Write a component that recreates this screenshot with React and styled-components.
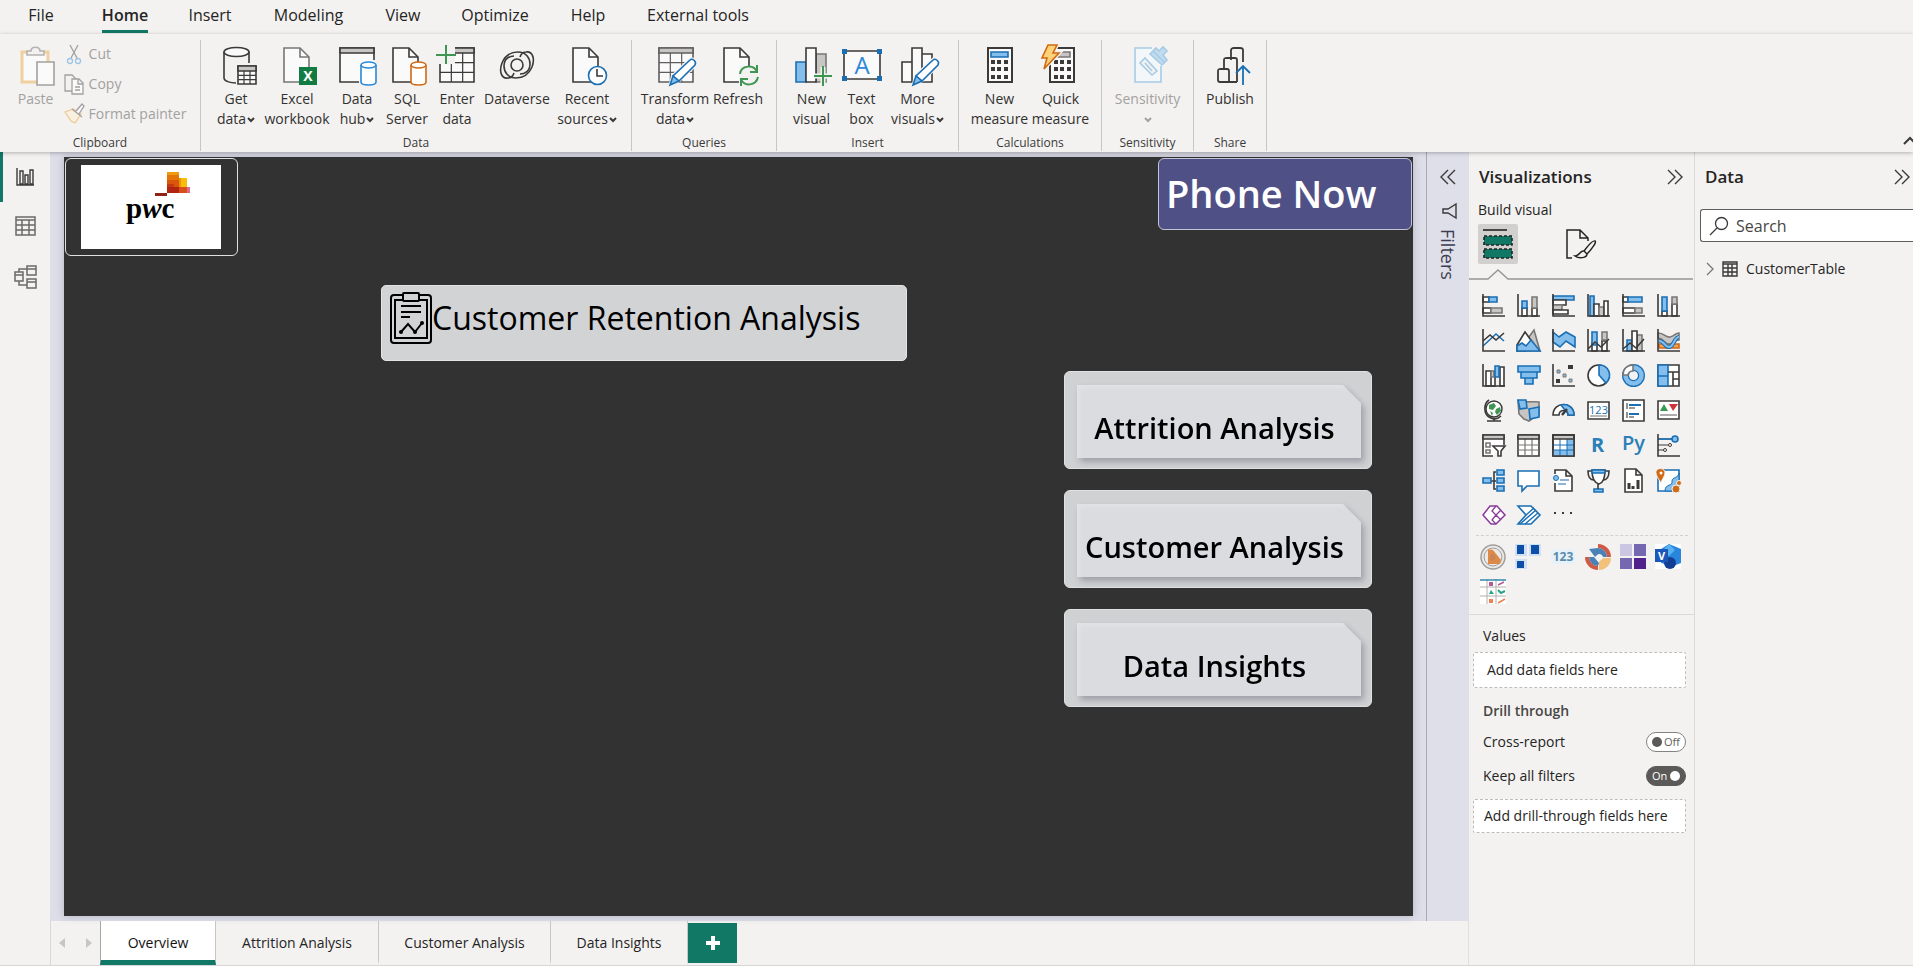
import React, { useState } from "react";
import styled, { createGlobalStyle, css } from "styled-components";

const ink = "#252423";
const line = "#3b3a39";
const grayLine = "#797775";
const grayFill = "#c8c6c4";
const blue = "#1a6fb4";
const blueFill = "#83beec";
const green = "#117865";
const leaf = "#3f9652";
const orange = "#d06a13";

const GlobalStyle = createGlobalStyle`
  *, *::before, *::after { box-sizing: border-box; }
  body {
    margin: 0;
    background: #f3f2f1;
    color: ${ink};
    font-family: "Open Sans", "Noto Sans", sans-serif;
    font-size: 14px;
  }
  button, input { font: inherit; color: inherit; }
  button { background: none; border: 0; padding: 0; cursor: pointer; }
  svg { display: block; overflow: visible; flex: none; }
`;

/* ---------- layout ---------- */

const Page = styled.div`
  min-height: 100vh;
  display: flex;
  flex-direction: column;
  overflow: hidden;
  border-bottom: 1px solid #d8d6d6;
`;

const MenuBar = styled.nav`
  display: flex;
  height: 34px;
  padding-left: 8px;
`;

const MenuTab = styled.button`
  width: ${(p) => p.$width}px;
  display: flex;
  justify-content: center;
  font-size: 16px;
  line-height: 30px;
  white-space: nowrap;
  font-weight: ${(p) => (p.$active ? 600 : 400)};
  span {
    height: 33px;
    border-bottom: 3px solid ${(p) => (p.$active ? green : "transparent")};
  }
`;

const Ribbon = styled.div`
  position: relative;
  z-index: 1;
  display: flex;
  height: 118px;
  padding: 6px 0 1px;
  background: #f3f2f1;
  box-shadow: 0 1px 4px rgba(0, 0, 0, 0.28);
`;

const Group = styled.section`
  display: flex;
  flex-direction: column;
  width: ${(p) => p.$width}px;
  border-right: 1px solid #c8c6c4;
`;

const GroupBody = styled.div`
  height: 95px;
  display: flex;
  justify-content: center;
  padding-top: 6px;
`;

const GroupName = styled.div`
  font-size: 12px;
  line-height: 16px;
  text-align: center;
  color: #3b3a39;
`;

const BigButton = styled.button`
  width: ${(p) => p.$width}px;
  display: flex;
  flex-direction: column;
  align-items: center;
  font-size: 14px;
  line-height: 20px;
  white-space: nowrap;
  color: ${(p) => (p.disabled ? "#a3a19f" : "#323130")};
  svg.art { margin-bottom: 3px; }
`;

const LabelLine = styled.span`
  height: 20px;
  display: flex;
  align-items: center;
  gap: 1px;
`;

const SmallButtons = styled.div`
  display: flex;
  flex-direction: column;
  padding-right: 6px;
`;

const SmallButton = styled.button`
  height: 30px;
  margin-top: -7px;
  margin-bottom: 7px;
  display: flex;
  align-items: center;
  gap: 5px;
  font-size: 14px;
  color: #a3a19f;
`;

const CollapseRibbon = styled.button`
  margin-left: auto;
  margin-right: -4px;
  align-self: flex-end;
  margin-bottom: 5px;
`;

const Main = styled.main`
  flex: 1;
  display: flex;
`;

const Rail = styled.nav`
  width: 50px;
  display: flex;
  flex-direction: column;
`;

const RailButton = styled.button`
  height: 50px;
  display: flex;
  align-items: center;
  padding-left: 9px;
  border-left: 3px solid ${(p) => (p.$active ? green : "transparent")};
`;

const Workspace = styled.div`
  flex: 1;
  min-width: 0;
  display: flex;
  flex-direction: column;
`;

const Stage = styled.div`
  flex: 1;
  display: flex;
  background: #dddee8;
`;

const CanvasArea = styled.div`
  flex: 1;
  display: flex;
  padding: 5px 13px 5px 14px;
`;

const Report = styled.div`
  flex: 1;
  display: flex;
  flex-direction: column;
  padding: 1px;
  background: #323232;
  box-shadow: 0 0 8px rgba(60, 60, 90, 0.25);
`;

const ReportHeader = styled.header`
  display: flex;
  justify-content: space-between;
  align-items: flex-start;
`;

const LogoCard = styled.div`
  width: 173px;
  height: 98px;
  padding: 6px 15px;
  border: 1px solid #e0e0e0;
  border-radius: 6px;
`;

const LogoImage = styled.div`
  width: 140px;
  height: 84px;
  padding: 7px 0 0 45px;
  background: #fff;
`;

const LogoText = styled.div`
  font-family: "Liberation Serif", serif;
  font-weight: 700;
  font-size: 29px;
  line-height: 20px;
  color: #000;
`;

const PhoneCard = styled.h1`
  width: 254px;
  height: 72px;
  margin: 0;
  padding-left: 7px;
  border: 1px solid #c4c4d8;
  border-radius: 6px;
  background: #4f5086;
  color: #fff;
  font-size: 38px;
  line-height: 68px;
  font-weight: 600;
  white-space: nowrap;
`;

const TitleCard = styled.h2`
  width: 526px;
  height: 76px;
  margin: 29px 0 0 316px;
  padding: 6px 8px;
  display: flex;
  align-items: flex-start;
  border-radius: 5px;
  border: 1px solid #e3e4e5;
  background: #d2d3d5;
  color: #000;
  font-size: 32px;
  line-height: 52px;
  font-weight: 400;
  white-space: nowrap;
`;

const PageNav = styled.nav`
  align-self: flex-end;
  display: flex;
  flex-direction: column;
  gap: 21px;
  margin: 10px 40px 0 0;
`;

const NavCard = styled.div`
  width: 308px;
  height: 98px;
  padding: 13px 10px 11px 12px;
  border: 1px solid #e0e1e2;
  border-radius: 6px;
  background: #cfd1d3;
`;

const NavShadow = styled.div`
  height: 73px;
  filter: drop-shadow(3px 4px 3px rgba(100, 100, 115, 0.45));
`;

const NavButton = styled.button`
  width: 100%;
  height: 100%;
  padding: 12px 9px 0 0;
  background: #dbdce0;
  box-shadow: inset 3px 3px 5px rgba(255, 255, 255, 0.2);
  clip-path: polygon(0 0, calc(100% - 18px) 0, 100% 18px, 100% 100%, 0 100%);
  color: #000;
  font-size: 29px;
  line-height: 40px;
  font-weight: 600;
  white-space: nowrap;
`;

const FiltersPane = styled.aside`
  width: 42px;
  display: flex;
  flex-direction: column;
  align-items: center;
  padding-top: 17px;
  border-left: 1px solid #a9a9b8;
  background: #dedfe9;
`;

const FiltersLabel = styled.div`
  display: flex;
  align-items: center;
  gap: 10px;
  margin-top: 18px;
  writing-mode: vertical-rl;
  font-size: 18px;
  line-height: 24px;
  font-weight: 500;
  color: #3d3d52;
`;

const PageTabs = styled.div`
  display: flex;
  height: 44px;
  border-left: 1px solid #d8d6d6;
`;

const TabArrows = styled.div`
  width: 49px;
  display: flex;
  align-items: center;
  justify-content: space-between;
  padding: 0 8px;
`;

const PageTab = styled.button`
  width: ${(p) => p.$width}px;
  border-right: 1px solid #c8c6c4;
  border-bottom: 5px solid transparent;
  padding-top: 4px;
  font-size: 14px;
  white-space: nowrap;
  ${(p) =>
    p.$active &&
    css`
      background: #fff;
      border-left: 1px solid #a8a6a4;
      border-bottom-color: ${green};
      color: #111;
    `}
`;

const AddPage = styled.button`
  width: 49px;
  height: 40px;
  margin-top: 2px;
  display: grid;
  place-items: center;
  background: ${green};
`;

const VizPane = styled.aside`
  width: 226px;
  display: flex;
  flex-direction: column;
  border-left: 1px solid #e1dfdd;
`;

const PaneHead = styled.div`
  display: flex;
  align-items: center;
  justify-content: space-between;
  padding: ${(p) => p.$pad};
  h2 {
    margin: 0;
    font-size: 17px;
    line-height: 24px;
    font-weight: 600;
  }
`;

const BuildLabel = styled.div`
  padding: 11px 0 0 9px;
  font-size: 14px;
  line-height: 20px;
  font-weight: 500;
`;

const ModeTabs = styled.div`
  display: flex;
  gap: 43px;
  margin-top: 4px;
  padding-left: 9px;
`;

const ModeButton = styled.button`
  width: 40px;
  height: 40px;
  display: grid;
  place-items: center;
  border-radius: 2px;
  background: ${(p) => (p.$active ? "#d2d0ce" : "transparent")};
`;

const Notch = styled.div`
  display: flex;
  height: 10px;
  margin-top: 6px;
  svg { width: 224px; height: 10px; }
`;

const IconGrid = styled.div`
  display: grid;
  grid-template-columns: repeat(6, 23px);
  grid-auto-rows: 23px;
  gap: 12px;
  padding: 14px 0 0 13px;
  button { display: grid; place-items: center; }
`;

const DashedRule = styled.div`
  margin: 8px 6px 0 7px;
  border-top: 1px dashed #d2d0ce;
`;

const CustomGrid = styled.div`
  display: grid;
  grid-template-columns: repeat(6, 26px);
  grid-auto-rows: 26px;
  gap: 9px;
  padding: 8px 0 9px 11px;
  border-bottom: 1px solid #dcdad8;
`;

const FieldWells = styled.div`
  display: flex;
  flex-direction: column;
  padding: 11px 8px 0 4px;
  font-size: 14px;
  line-height: 20px;
`;

const WellName = styled.div`
  padding-left: 10px;
  font-weight: ${(p) => (p.$strong ? 600 : 400)};
  color: ${(p) => (p.$strong ? "#484644" : ink)};
`;

const DropWell = styled.div`
  margin: ${(p) => p.$margin};
  padding: ${(p) => p.$pad};
  background: #fff;
  border: 1px dashed #bebbb8;
  border-radius: 2px;
  white-space: nowrap;
`;

const ToggleList = styled.div`
  padding-top: 4px;
`;

const ToggleRow = styled.label`
  height: 34px;
  display: flex;
  align-items: center;
  justify-content: space-between;
  padding-left: 10px;
`;

const ToggleTrack = styled.span`
  position: relative;
  width: 40px;
  height: 20px;
  display: flex;
  flex-direction: ${(p) => (p.$on ? "row-reverse" : "row")};
  align-items: center;
  justify-content: space-between;
  padding: 0 5px;
  border: 1px solid ${(p) => (p.$on ? "#5c5a58" : "#858381")};
  border-radius: 10px;
  background: ${(p) => (p.$on ? "#5c5a58" : "#fff")};
  color: ${(p) => (p.$on ? "#fff" : "#605e5c")};
  font-size: 11px;
  i {
    width: 10px;
    height: 10px;
    border-radius: 50%;
    background: ${(p) => (p.$on ? "#fff" : "#5c5a58")};
  }
  input {
    position: absolute;
    inset: 0;
    margin: 0;
    opacity: 0;
  }
`;

const DataPane = styled.aside`
  width: 219px;
  border-left: 1px solid #dcdad8;
`;

const SearchBox = styled.label`
  height: 33px;
  margin: 20px 0 0 5px;
  padding-left: 9px;
  display: flex;
  align-items: center;
  gap: 8px;
  border: 1px solid #605e5c;
  border-right: 0;
  border-radius: 3px 0 0 3px;
  background: #fff;
  input {
    flex: 1;
    min-width: 0;
    border: 0;
    padding: 0;
    outline: 0;
    background: none;
    font-size: 16px;
  }
  input::placeholder { color: #484644; opacity: 1; }
`;

const TreeItem = styled.button`
  display: flex;
  align-items: center;
  margin: 17px 0 0 11px;
  font-size: 14px;
  line-height: 20px;
  svg + svg { margin: 0 8px 0 8px; }
`;

/* ---------- ribbon icons ---------- */

const Art = ({ children }) => (
  <svg className="art" width="44" height="40" viewBox="0 0 44 40" fill="none" stroke={line} strokeWidth="1.6" aria-hidden="true">
    {children}
  </svg>
);

const Doc = ({ x = 8, stroke = line }) => (
  <g stroke={stroke}>
    <path d={`M${x + 1} 2h16l9 9v25h-25z`} fill="#fafafa" />
    <path d={`M${x + 17} 2v9h9`} />
  </g>
);

const Cylinder = ({ color }) => (
  <g stroke={color} fill="#fff">
    <path d="M26 19v17c0 4 15 4 15 0V19" />
    <ellipse cx="33.500" cy="19" rx="7.500" ry="3" />
  </g>
);

const Pencil = () => (
  <g stroke={blue}>
    <path d="M37 14c2-2 7 1 5 5L26 34l-8 4 2-8z" fill="#f3f2f1" stroke="#f3f2f1" strokeWidth="4" />
    <path d="M37 14c2-2 7 1 5 5L26 35l-6-5z" fill="#fff" />
    <path d="M20 30l6 5-9 4z" fill={blueFill} />
  </g>
);

const Table = ({ x, y, w, h, color = line }) => (
  <g stroke={color}>
    <path d={`M${x} ${y}h${w}v${h}h-${w}z`} fill="#fafafa" />
    <path d={`M${x} ${y}h${w}v5h-${w}z`} fill={grayFill} />
    <path
      strokeWidth="1.2"
      d={`M${x + w / 3} ${y + 5}v${h - 5}M${x + (2 * w) / 3} ${y + 5}v${h - 5}M${x} ${y + 5 + (h - 5) / 3}h${w}M${x} ${y + 5 + (2 * (h - 5)) / 3}h${w}`}
    />
  </g>
);

const Keys = ({ dx = 0 }) => (
  <g fill={line} stroke="none">
    {[14, 21, 29].map((y) => [13, 19, 26].map((x) => <rect key={`${x}-${y}`} x={x + dx} y={y} width="4" height="4" />))}
  </g>
);

const swirl = "M13 32c-7 1-9-7-6-15C10 10 16 6 23 6c8 0 12 6 12 12 0 7-5 10-10 10M13 32c3 0 5-2 6-5";

const art = {
  paste: (
    <g>
      <path d="M8 6h26v30H8z" stroke="#f0cfa0" strokeWidth="3" fill="#fafafa" />
      <path d="M13 8V5h4c0-5 9-5 9 0h4v4H13z" stroke="#b5b3b1" fill="#f3f2f1" />
      <path d="M23 16h17v23H23z" stroke="#a3a19f" fill="#fafafa" />
    </g>
  ),
  getData: (
    <g>
      <path d="M10 6v26c0 3 6 5 12 5M35 6v11" />
      <ellipse cx="22.500" cy="6" rx="12.500" ry="4.500" fill="#fafafa" />
      <Table x={24} y={20} w={18} h={18} />
    </g>
  ),
  excel: (
    <g>
      <Doc x={8} stroke={grayLine} />
      <rect x="24" y="21" width="18" height="18" fill="#107c41" stroke="none" />
      <text x="33" y="35" textAnchor="middle" fontSize="14" fontWeight="700" fill="#fff" stroke="none">X</text>
    </g>
  ),
  hub: (
    <g>
      <path d="M39 14V2H5v34h19" fill="#fafafa" />
      <path d="M5 2h34v5H5z" fill={grayFill} />
      <Cylinder color="#2b88d8" />
    </g>
  ),
  sql: (
    <g>
      <Doc x={7} />
      <Cylinder color={orange} />
    </g>
  ),
  enter: (
    <g>
      <Table x={5} y={2} w={34} h={34} />
      <path d="M0 0h20v18H0z" fill="#f3f2f1" stroke="none" />
      <path d="M11-1v19M1 9h20" stroke={leaf} strokeWidth="2" />
    </g>
  ),
  dataverse: (
    <g strokeWidth="1.600">
      <circle cx="22" cy="19" r="6" />
      <path d={swirl} />
      <path d={swirl} transform="rotate(180 22 19)" />
    </g>
  ),
  recent: (
    <g>
      <Doc x={7} />
      <circle cx="32.500" cy="29.500" r="9" fill="#fff" stroke={blue} />
      <path d="M32 23v7h6" />
    </g>
  ),
  transform: (
    <g>
      <Table x={6} y={2} w={34} h={34} color="#605e5c" />
      <Pencil />
    </g>
  ),
  refresh: (
    <g>
      <Doc x={7} />
      <path d="M23 20h20v20H23z" fill="#f3f2f1" stroke="none" />
      <path d="M24 28c1-9 14-10 17-2M41 19v7h-7M42 31c-2 9-14 10-17 2M25 40v-7h7" stroke={leaf} strokeWidth="2" />
    </g>
  ),
  newVisual: (
    <g>
      <path d="M6 16h10v20H6z" fill={blueFill} stroke={blue} />
      <path d="M26 8h10v28H26z" fill={grayFill} stroke={grayLine} />
      <path d="M16 2h10v34H16z" fill="#fafafa" />
      <path d="M33 21v18M24 30h18" stroke="#f3f2f1" strokeWidth="5" />
      <path d="M33 20v20M24 30h18" stroke={leaf} strokeWidth="2" />
    </g>
  ),
  textBox: (
    <g>
      <path d="M4 5h36v28H4z" fill="#fafafa" />
      <g fill={blue} stroke="none">
        <path d="M2 3h5v5H2zM37 3h5v5h-5zM2 30h5v5H2zM37 30h5v5h-5z" />
      </g>
      <text x="22" y="28" textAnchor="middle" fontSize="24" fill="#2b88d8" stroke="none">A</text>
    </g>
  ),
  more: (
    <g>
      <path d="M6 16h10v20H6zM26 8h10v28H26zM16 2h10v34H16z" fill="#fafafa" />
      <Pencil />
    </g>
  ),
  measure: (
    <g>
      <path d="M10 2h24v34H10z" fill="#fafafa" strokeWidth="2" />
      <path d="M13 6h17v5H13z" fill={blueFill} stroke={blue} />
      <Keys />
    </g>
  ),
  quick: (
    <g>
      <path d="M11 2h24v34H11z" fill="#fafafa" strokeWidth="2" />
      <path d="M15 6h16v5H15z" fill={grayFill} stroke={grayLine} />
      <Keys dx={2} />
      <path d="M9-1h9l-4 8h6L5 23l3-11H3z" fill="#ffd27a" stroke="#f3f2f1" strokeWidth="4" />
      <path d="M9-1h9l-4 8h6L5 23l3-11H3z" fill="#ffd27a" stroke={orange} />
    </g>
  ),
  sensitivity: (
    <g stroke="#a6cbe6">
      <path d="M26 2H9v34h26V20" fill="#f3f7fa" />
      <path d="M14 17l5-5 12 13-5 4zM19 17l7 8" fill="#f3f2f1" />
      <path d="M24 8l6-6 3 3 4-4 4 4-4 4 4 5-5 5z" fill="#c2dcef" />
      <path d="M27 5l12 12" />
    </g>
  ),
  publish: (
    <g strokeWidth="1.800">
      <path d="M23 14V4c0-1 1-2 3-2h6c2 0 3 1 3 2v12M16 23V14c0-2 1-2 3-2h8c2 0 2 1 2 2v22M29 36H12c-2 0-2-1-2-2v-9c0-2 1-2 3-2h6c2 0 2 1 2 2v11" />
      <path d="M35 39V20M28 27l7-7 7 7" stroke={blue} />
    </g>
  ),
};

const Caret = ({ color = line }) => (
  <svg width="8" height="8" viewBox="0 0 8 8" fill="none" stroke={color} strokeWidth="2" aria-hidden="true">
    <path d="M1 3l3 3 3-3" />
  </svg>
);

const DoubleChevron = ({ left }) => (
  <svg width="16" height="16" viewBox="0 0 16 16" fill="none" stroke={line} strokeWidth="1.4" aria-hidden="true">
    <path d={left ? "M8 1L1 8l7 7M15 1L8 8l7 7" : "M1 1l7 7-7 7M8 1l7 7-7 7"} />
  </svg>
);

const small = {
  cut: (
    <g stroke="#a3a19f">
      <path d="M6 1l7 13M14 1L7 14" />
      <g stroke="#9cc4e4"><circle cx="6" cy="17" r="2.500" /><circle cx="14" cy="17" r="2.500" /></g>
    </g>
  ),
  copy: (
    <g stroke="#a3a19f">
      <path d="M8 17H1V1h7l4 4" />
      <path d="M8 5h7l4 4v11H8zM14 5v5h5M11 13h5M11 16h5" fill="#fafafa" />
    </g>
  ),
  painter: (
    <g stroke="#a3a19f">
      <path d="M1 9l6 9 4 2 6-9-8-5z" stroke="#f0c894" fill="#faf0e0" />
      <path d="M8 6l10 8M12 8l6-7 2 2-5 8" fill="#fafafa" />
    </g>
  ),
};

/* ---------- visualization icons ---------- */

const G = ({ d, f = "none", s = line, w = 1.6 }) => <path d={d} fill={f} stroke={s} strokeWidth={w} />;
const Axis = () => <G d="M1 0v22h22" />;

const vizIcons = [
  ["Stacked bar chart", <><G d="M1 14h8v5H1z" f="#fff" /><G d="M9 14h11v5H9z" f={grayFill} s={grayLine} /><G d="M1 3h6v5H1z" f="#fff" /><G d="M7 3h8v5H7z" f={blueFill} s={blue} /><Axis /></>],
  ["Stacked column chart", <><G d="M5 14h5v8H5zM15 14h5v8h-5z" f="#fff" /><G d="M5 7h5v7H5z" f={blueFill} s={blue} /><G d="M15 3h5v11h-5z" f={grayFill} s={grayLine} /><Axis /></>],
  ["Clustered bar chart", <><G d="M1 2h21v4H1z" f={blueFill} s={blue} /><G d="M1 6h13v5H1z" f="#fff" /><G d="M1 11h9v5H1z" f={grayFill} s={grayLine} /><G d="M1 16h15v4H1z" f="#fff" /><Axis /></>],
  ["Clustered column chart", <><G d="M3 2h4v20H3z" f={blueFill} s={blue} /><G d="M7 10h5v12H7z" f="#fff" /><G d="M12 13h5v9h-5z" f={grayFill} s={grayLine} /><G d="M17 7h4v15h-4z" f="#fff" /><Axis /></>],
  ["100% stacked bar chart", <><G d="M1 14h12v5H1z" f="#fff" /><G d="M13 14h7v5h-7z" f={grayFill} s={grayLine} /><G d="M1 3h5v5H1z" f="#fff" /><G d="M6 3h14v5H6z" f={blueFill} s={blue} /><Axis /></>],
  ["100% stacked column chart", <><G d="M5 17h5v5H5zM15 10h5v12h-5z" f="#fff" /><G d="M5 3h5v14H5z" f={blueFill} s={blue} /><G d="M15 3h5v7h-5z" f={grayFill} s={grayLine} /><Axis /></>],
  ["Line chart", <><G d="M1 17L14 5l8 7" s={blue} /><G d="M1 12l7-6 6 5 8-7" /><Axis /></>],
  ["Area chart", <><G d="M9 12l8-11 6 21H8z" f={grayFill} s={grayLine} /><G d="M0 16L8 3l8 11-8 8H0z" f="#fff" /><G d="M0 22v-5l5-3 4 3 5-6 9 11z" f={blueFill} s={blue} /></>],
  ["Stacked area chart", <><G d="M1 3l6 5 7-5 9 5v10l-9-6-6 6-7-5z" f={blueFill} s={blue} /><Axis /></>],
  ["Line and stacked column chart", <><G d="M5 14h5v8H5zM15 12h5v10h-5z" f="#fff" /><G d="M5 3h5v13H5z" f={blueFill} s={blue} /><G d="M15 3h5v8h-5z" f={grayFill} s={grayLine} /><G d="M1 20l7-7 6 5 8-8" /><Axis /></>],
  ["Line and clustered column chart", <><G d="M5 11h5v11H5z" f={blueFill} s={blue} /><G d="M15 6h5v16h-5z" f={grayFill} s={grayLine} /><G d="M10 2h5v20h-5z" f="#fff" /><G d="M1 20l7-6 6 5 8-9" /><Axis /></>],
  ["Ribbon chart", <><G d="M2 15h20v4H2z" f="#f5a04c" s={orange} /><G d="M1 4c7 0 7 5 12 4s5-4 9-4v7c-5 0-5 4-10 4S7 9 1 9z" f={grayFill} s={grayLine} /><G d="M2 12c6 0 5 6 10 6s5-10 10-10" s={blue} w={4} /><G d="M2 12c6 0 5 6 10 6s5-10 10-10" s={blueFill} w={2} /><Axis /></>],
  ["Waterfall chart", <><G d="M4 7h5v15H4zM9 8h4v14H9zM18 3h4v19h-4z" f="#fff" /><G d="M9 7h3v6H9z" f={grayFill} s={grayLine} /><G d="M13 2h4v11h-4z" f={blueFill} s={blue} /><Axis /></>],
  ["Funnel chart", <G d="M1 2h22v6H1zM4 8h16v6H4zM8 14h8v6H8z" f={blueFill} s={blue} />],
  ["Scatter chart", <><g fill={blueFill} stroke={grayLine} strokeWidth="1"><path d="M5 6h3v3H5zM11 10h3v3h-3zM17 15h3v3h-3z" /></g><path d="M16 1h5v4h-5zM4 15h4v4H4z" fill={line} /><Axis /></>],
  ["Pie chart", <><circle cx="11.500" cy="11.500" r="10.500" fill="#fff" stroke={line} strokeWidth="1.600" /><G d="M12 1v10l7 8C26 12 22 1 12 1z" f={blueFill} s={blue} /></>],
  ["Donut chart", <><circle cx="11.500" cy="11.500" r="8" fill="none" stroke={blue} strokeWidth="7" /><circle cx="11.500" cy="11.500" r="8" fill="none" stroke={blueFill} strokeWidth="4.500" /><G d="M1 11C1 5 5 1 11 1v6c-3 0-5 2-5 4z" f="#fff" s={grayLine} /></>],
  ["Treemap", <><G d="M1 1h21v21H1z" f="#fff" /><G d="M1 1h10v21H1zM1 12h10" f={blueFill} s={blue} /><G d="M11 8h11M16 8v14M16 15h6" /></>],
  ["Map", <><circle cx="12" cy="10" r="8" fill="#fff" stroke={line} strokeWidth="1.400" /><path d="M7 6l5-2 2 3-3 4-4-1zM14 10l4-2 1 4-4 4-2-3zM8 12l3 2-1 3z" fill={leaf} /><G d="M7 1C1 5 2 15 7 18s9 2 12-1M12 19v3M5 22h14" /></>],
  ["Filled map", <><G d="M1 2c7 2 14 0 21 1v13l-6 3-4 3-5-2-5-5z" f={grayFill} s={grayLine} /><G d="M1 1h8l1 8-7 1zM12 10l10-2v10l-9 2z" f={blueFill} s={blue} /></>],
  ["Gauge", <><G d="M1 16C1 2 22 2 22 16h-6c0-6-9-6-9 0z" f="#fff" /><G d="M9 6c7-2 13 3 13 10h-6c0-2-1-4-3-5z" f={blueFill} s={blue} /><G d="M10 16l5-6" w={2.5} /></>],
  ["Card", <><G d="M1 3h21v17H1z" f="#fff" /><text x="11.500" y="15" textAnchor="middle" fontSize="11" fill={blue}>123</text><G d="M3 17h17" s={grayLine} w={1} /></>],
  ["Multi-row card", <><G d="M1 1h21v21H1z" f="#fff" /><G d="M5 4v6M5 13v6" s={grayLine} /><G d="M7 6h12M7 15h10" s={blue} w={2.2} /><G d="M7 9h6M7 18h5" s={grayLine} /></>],
  ["KPI", <><G d="M1 2h21v18H1z" f="#fff" /><path d="M3 12l4-7 4 7z" fill={leaf} /><path d="M12 5h9l-5 7z" fill="#d13438" /><G d="M3 16h17" s={grayLine} w={1.2} /></>],
  ["Slicer", <><G d="M11 22H1V1h21v10" f="#fff" /><G d="M1 1h21v4H1z" f={grayFill} /><G d="M4 9h4v4H4zM4 16h4v3H4z" s={grayLine} /><G d="M11 12h12l-4 5v5h-3v-5z" f="#fff" /></>],
  ["Table", <><G d="M1 1h21v21H1z" f="#fff" /><G d="M8 5v17M15 5v17M1 11h21M1 16h21" s={grayLine} w={1.2} /><G d="M1 1h21v4H1z" f={grayFill} /></>],
  ["Matrix", <><G d="M1 1h21v21H1z" f="#fff" /><path d="M1 16h14V5h7v17H1z" fill={blueFill} /><G d="M8 5v17M15 5v17M1 11h21M1 16h21" w={1} s={blue} /><G d="M1 1h21v4H1z" f={grayFill} /><G d="M1 1h21v21H1z" /></>],
  ["R script visual", <text x="10.500" y="18" textAnchor="middle" fontSize="20" fontWeight="700" fill="#2a7fb8">R</text>],
  ["Python visual", <text x="11.500" y="16" textAnchor="middle" fontSize="20" fontWeight="600" fill="#2a7fb8">Py</text>],
  ["Key influencers", <><G d="M1 5h15M1 11h10M1 16h6" s={grayLine} /><G d="M1 5h15" s={blue} /><circle cx="18" cy="5" r="3" fill={blueFill} stroke={blue} strokeWidth="1.600" /><circle cx="13" cy="11" r="1.500" fill="#fff" stroke={line} /><circle cx="8" cy="16" r="1.500" fill="#fff" stroke={line} /><Axis /></>],
  ["Decomposition tree", <><G d="M8 12h6M14 3h-2v17h2" /><G d="M1 9h8v5H1zM15 1h7v5h-7zM15 9h7v5h-7zM15 17h7v5h-7z" f={blueFill} s={blue} /></>],
  ["Q&A", <G d="M1 2h21v15H10l-5 5v-5H1z" f="#fff" s={blue} />],
  ["Smart narrative", <><G d="M3 5V1h11l6 6v15H3v-8M14 1v6h6" f="#fff" /><circle cx="4" cy="9" r="2.500" fill={blueFill} stroke={blue} /><G d="M8 11h9M6 15h8" s={blue} w={1.2} /></>],
  ["Metrics", <><G d="M5 2H1c0 6 2 9 6 9M18 2h4c0 6-2 9-6 9" /><G d="M5 1h13c0 9-2 13-6 14-5-1-7-5-7-14z" f="#fff" /><G d="M5 1h13v3H5zM7 20h9v3H7z" f={blueFill} s={blue} /><G d="M11 15v5" /></>],
  ["Paginated report", <><G d="M3 0h11l6 6v17H3zM14 0v6h6" f="#fff" /><G d="M7 14v6M11 17v3M16 11v9" w={3} /></>],
  ["ArcGIS map", <><G d="M1 1h21v21H1z" s={blue} f="#fff" /><path d="M8 22c0-8 8-4 7-10 0-4 7-3 7-8v12l-7 6z" fill={blueFill} stroke={blue} /><path d="M-1 2c2-4 9-3 9 2 0 3-4 8-4 10C3 12-2 6-1 2z" fill={orange} stroke="#f3f2f1" /><circle cx="4" cy="4" r="1.500" fill="#fff" /><circle cx="19" cy="20" r="4" fill={orange} stroke="#f3f2f1" /><circle cx="22" cy="14" r="2.500" fill={orange} stroke="#f3f2f1" /></>],
  ["Power Apps", <><G d="M8 2h7l8 9-9 9H9l-8-9z" f="#fff" s="#8a3a9a" w={1.5} /><G d="M14 2l-4 5 4 4-4 5 4 4M14 11l5-5M14 11l5 5M10 7l4 4-4 5" s="#8a3a9a" w={1.3} /></>],
  ["Power Automate", <><G d="M1 2h13l9 9-9 9H1l8-9z" f="#fff" s={blue} /><G d="M9 11l8-7M3 20L19 6M8 20l13-11" s={blue} w={1.4} /></>],
  ["Get more visuals", <g fill={line}><rect x="2" y="8" width="2" height="2" /><rect x="10" y="8" width="2" height="2" /><rect x="18" y="8" width="2" height="2" /></g>],
];

const customIcons = [
  ["Radar chart", <><circle cx="13" cy="13" r="12" fill="#eceae8" stroke="#a09e9c" strokeWidth="1.500" /><circle cx="13" cy="13" r="9" fill="none" stroke="#a09e9c" /><path d="M8 5l5 1 8 10-1 4H8z" fill="#dd8a48" /><path d="M11 10c4-1 6 4 3 6s-5 0-3-6z" fill="#c98555" /></>],
  ["Hierarchy chart", <><path d="M0 0h12v12H0zM14 0h12v12H14zM0 15h12v10H0z" fill="#cfe0f4" /><path d="M2 1h7v9H2zM16 1h8v9h-8zM2 17h7v7H2z" fill="#0d4ea6" /></>],
  ["Card with states", <><rect x="1" y="5" width="24" height="15" rx="4" fill="#e6f1f9" /><text x="13" y="17" textAnchor="middle" fontSize="12" fontWeight="700" fill="#5a8aac">123</text></>],
  ["Drill-down donut", <><path d="M13 0a13 13 0 0 1 13 13h-4a9 9 0 0 0-9-9z" fill="#cf5b45" /><path d="M4 5l9-1a9 9 0 0 1 9 9h-4c-1-3-4-4-6-2l-2 2z" fill="#4a82b8" /><path d="M26 14a12 12 0 0 1-12 12v-8l4-4z" fill="#f2c27c" /><path d="M0 13a13 13 0 0 0 13 13v-4a9 9 0 0 1-9-9z" fill="#cf5b45" /><path d="M4 13h5l5 6-1 3a9 9 0 0 1-9-9z" fill="#4a82b8" /></>],
  ["Heat map", <><path d="M0 0h12v12H0z" fill="#cbc6e2" /><path d="M14 0h12v12H14zM0 14h12v11H0z" fill="#7568b0" /><path d="M14 14h12v11H14z" fill="#52218b" /></>],
  ["Visio visual", <><path d="M0 0h26v25H0z" fill="#fff" /><path d="M6 5l8-5 12 5v14l-8 3-12-3z" fill="#2a86dc" /><path d="M14 0l6 6-6 6-6-6z" fill="#57b1f2" /><circle cx="15" cy="19" r="6" fill="#123f93" /><path d="M0 5h13v13H0z" fill="#1a57b8" /><text x="6.500" y="16" textAnchor="middle" fontSize="11" fontWeight="700" fill="#fff">V</text></>],
  ["Small multiples", <><path d="M0 0h26v25H0z" fill="#fff" /><path d="M7 0v25M16 0v25M0 8h26M0 17h26" stroke="#b3b1af" fill="none" /><path d="M0 1h26" stroke="#2c88a8" strokeWidth="1.500" /><path d="M9 3h4v4H9z" fill="#b45a9a" /><path d="M18 6l6-3" stroke="#b45a9a" strokeWidth="1.500" /><path d="M9 15l2-4 3 4z" fill="#25a488" /><path d="M18 11l3 3 4-2" stroke="#25a488" strokeWidth="2" fill="none" /><path d="M9 20h4v4H9z" fill="#f08050" /><path d="M18 24l7-4" stroke="#f08050" strokeWidth="1.500" /></>],
];

const VizIcon = ({ size, children }) => (
  <svg width={size} height={size} viewBox={`0 0 ${size} ${size}`} aria-hidden="true">{children}</svg>
);

/* ---------- data ---------- */

const menu = [
  ["File", 66], ["Home", 102], ["Insert", 68], ["Modeling", 129], ["View", 60],
  ["Optimize", 124], ["Help", 62], ["External tools", 158],
];

const groups = [
  { name: "Data", width: 431, items: [
    ["getData", 54, "Get", "data", true], ["excel", 68, "Excel", "workbook"], ["hub", 52, "Data", "hub", true],
    ["sql", 48, "SQL", "Server"], ["enter", 52, "Enter", "data"], ["dataverse", 68, "Dataverse"], ["recent", 72, "Recent", "sources", true],
  ] },
  { name: "Queries", width: 145, items: [["transform", 68, "Transform", "data", true], ["refresh", 58, "Refresh"]] },
  { name: "Insert", width: 182, items: [["newVisual", 56, "New", "visual"], ["textBox", 44, "Text", "box"], ["more", 68, "More", "visuals", true]] },
  { name: "Calculations", width: 143, items: [["measure", 61, "New", "measure"], ["quick", 61, "Quick", "measure"]] },
  { name: "Sensitivity", width: 92, items: [["sensitivity", 72, "Sensitivity", "", true, true]] },
  { name: "Share", width: 73, items: [["publish", 60, "Publish"]] },
];

const RibbonButton = ({ item: [icon, width, first, second, caret, disabled] }) => (
  <BigButton $width={width} disabled={disabled}>
    <Art>{art[icon]}</Art>
    <LabelLine>{first}</LabelLine>
    {(second || caret) && (
      <LabelLine>
        {second}
        {caret && <Caret color={disabled ? "#a3a19f" : line} />}
      </LabelLine>
    )}
  </BigButton>
);

const Toggle = ({ label, initial }) => {
  const [on, setOn] = useState(initial);
  return (
    <ToggleRow>
      {label}
      <ToggleTrack $on={on}>
        <input type="checkbox" role="switch" checked={on} onChange={() => setOn(!on)} />
        <i />
        {on ? "On" : "Off"}
      </ToggleTrack>
    </ToggleRow>
  );
};

export default function App() {
  return (
    <Page>
      <GlobalStyle />
      <MenuBar>
        {menu.map(([name, width]) => (
          <MenuTab key={name} $width={width} $active={name === "Home"}><span>{name}</span></MenuTab>
        ))}
      </MenuBar>
      <Ribbon>
        <Group $width={201}>
          <GroupBody>
            <BigButton $width={56} disabled>
              <Art>{art.paste}</Art>
              <LabelLine>Paste</LabelLine>
            </BigButton>
            <SmallButtons>
              {[["cut", "Cut"], ["copy", "Copy"], ["painter", "Format painter"]].map(([icon, label]) => (
                <SmallButton key={icon} disabled>
                  <svg width="20" height="20" viewBox="0 0 20 20" fill="none" strokeWidth="1.300" aria-hidden="true">{small[icon]}</svg>
                  {label}
                </SmallButton>
              ))}
            </SmallButtons>
          </GroupBody>
          <GroupName>Clipboard</GroupName>
        </Group>
        {groups.map((g) => (
          <Group key={g.name} $width={g.width}>
            <GroupBody>{g.items.map((item) => <RibbonButton key={item[0]} item={item} />)}</GroupBody>
            <GroupName>{g.name}</GroupName>
          </Group>
        ))}
        <CollapseRibbon aria-label="Collapse ribbon">
          <svg width="14" height="10" viewBox="0 0 14 10" fill="none" stroke={line} strokeWidth="2"><path d="M1 8l6-6 6 6" /></svg>
        </CollapseRibbon>
      </Ribbon>

      <Main>
        <Rail>
          <RailButton $active aria-label="Report view">
            <svg width="26" height="22" viewBox="0 0 26 22" fill="none" stroke={line} strokeWidth="1.4">
              <path d="M5 2v17h17M8 5h3v13H8zM13 9h3v9h-3zM18 4h3v14h-3z" />
            </svg>
          </RailButton>
          <RailButton aria-label="Table view">
            <svg width="26" height="22" viewBox="0 0 26 22" fill="none" stroke="#6c6a68" strokeWidth="1.5">
              <path d="M4 1h19v18H4zM4 4h19M4 9h19M4 14h19M10 4v15M17 4v15" />
            </svg>
          </RailButton>
          <RailButton aria-label="Model view">
            <svg width="26" height="22" viewBox="0 0 26 22" fill="none" stroke="#6c6a68" strokeWidth="1.5">
              <path d="M3 6h8v9H3zM3 9h8M15 0h9v9h-9zM15 3h9M15 13h9v9h-9zM15 16h9M7 6V3h8M7 15v4h8" />
            </svg>
          </RailButton>
        </Rail>

        <Workspace>
          <Stage>
            <CanvasArea>
              <Report>
                <ReportHeader>
                  <LogoCard>
                    <LogoImage>
                      <svg width="66" height="26" viewBox="0 0 66 26" aria-hidden="true">
                        <path d="M29 21h12v3H29z" fill="#8e2416" />
                        <path d="M41 0h12v21H41z" fill="#d9560b" />
                        <path d="M41 0h12v3H41z" fill="#ef9b10" />
                        <path d="M41 3h12v5H41z" fill="#e37408" />
                        <path d="M41 15h12v6H41z" fill="#b02410" />
                        <path d="M41 12h7v3h-7z" fill="#c63a12" />
                        <path d="M53 6h8v9h-8z" fill="#f8bd08" />
                        <path d="M53 6h2v9h-2z" fill="#ec9408" />
                        <path d="M53 15h8v6h-8z" fill="#d84f18" />
                        <path d="M61 15h3v6h-3z" fill="#e0688c" />
                      </svg>
                      <LogoText>p<em>w</em>c</LogoText>
                    </LogoImage>
                  </LogoCard>
                  <PhoneCard>Phone Now</PhoneCard>
                </ReportHeader>
                <TitleCard>
                  <svg width="42" height="52" viewBox="0 0 42 52" fill="none" stroke="#000" strokeWidth="2" aria-hidden="true">
                    <rect x="1" y="3" width="40" height="48" rx="3" />
                    <path d="M13 8H5v38h32V8h-8" />
                    <rect x="13" y="1" width="16" height="8" rx="1" fill="#d2d3d5" />
                    <path d="M11 14h20M11 20h20M11 25h9M11 40l7-8 7 8 7-9" />
                    <g fill="#000" stroke="none"><circle cx="11" cy="40" r="2" /><circle cx="25" cy="40" r="2" /><circle cx="32" cy="31" r="2" /></g>
                  </svg>
                  Customer Retention Analysis
                </TitleCard>
                <PageNav aria-label="Report pages">
                  {["Attrition Analysis", "Customer Analysis", "Data Insights"].map((name) => (
                    <NavCard key={name}><NavShadow><NavButton>{name}</NavButton></NavShadow></NavCard>
                  ))}
                </PageNav>
              </Report>
            </CanvasArea>
            <FiltersPane>
              <button aria-label="Expand filters"><DoubleChevron left /></button>
              <FiltersLabel>
                <svg width="16" height="16" viewBox="0 0 16 16" fill="none" stroke={line} strokeWidth="1.4" aria-hidden="true">
                  <path d="M16 1v14L8 10H3V6h5z" />
                </svg>
                Filters
              </FiltersLabel>
            </FiltersPane>
          </Stage>
          <PageTabs>
            <TabArrows>
              <svg width="6" height="10" viewBox="0 0 6 10" aria-hidden="true"><path d="M6 0v10L0 5z" fill="#c8c6c4" /></svg>
              <svg width="6" height="10" viewBox="0 0 6 10" aria-hidden="true"><path d="M0 0v10l6-5z" fill="#c8c6c4" /></svg>
            </TabArrows>
            <PageTab $width={116} $active>Overview</PageTab>
            <PageTab $width={163}>Attrition Analysis</PageTab>
            <PageTab $width={172}>Customer Analysis</PageTab>
            <PageTab $width={137}>Data Insights</PageTab>
            <AddPage aria-label="New page">
              <svg width="14" height="14" viewBox="0 0 14 14" stroke="#fff" strokeWidth="4"><path d="M7 0v14M0 7h14" /></svg>
            </AddPage>
          </PageTabs>
        </Workspace>

        <VizPane>
          <PaneHead $pad="13px 11px 0 10px">
            <h2>Visualizations</h2>
            <button aria-label="Collapse visualizations"><DoubleChevron /></button>
          </PaneHead>
          <BuildLabel>Build visual</BuildLabel>
          <ModeTabs>
            <ModeButton $active aria-label="Build visual">
              <svg width="30" height="30" viewBox="0 0 30 30" fill={green} stroke={ink} strokeWidth="1.6">
                <path d="M0 1h24" />
                <path d="M1 7h28v9H1zM1 20h28v9H1z" strokeDasharray="3 2" />
              </svg>
            </ModeButton>
            <ModeButton aria-label="Format visual">
              <svg width="30" height="30" viewBox="0 0 30 30" fill="none" stroke={ink} strokeWidth="1.5">
                <path d="M6 29H1V1h13l8 8v3M14 1v8h8" />
                <path d="M29 12c2 1-4 9-8 13l-3-3c3-4 9-11 11-10zM18 22c-4-1-4 5-9 5 4 3 12 2 12-2" />
              </svg>
            </ModeButton>
          </ModeTabs>
          <Notch>
            <svg viewBox="0 0 224 10" fill="none" stroke="#979593" strokeWidth="1.4" aria-hidden="true"><path d="M0 9h19l10-9 10 9h185" /></svg>
          </Notch>
          <IconGrid>
            {vizIcons.map(([name, drawing]) => (
              <button key={name} aria-label={name}><VizIcon size={23}>{drawing}</VizIcon></button>
            ))}
          </IconGrid>
          <DashedRule />
          <CustomGrid>
            {customIcons.map(([name, drawing]) => (
              <button key={name} aria-label={name}><VizIcon size={26}>{drawing}</VizIcon></button>
            ))}
          </CustomGrid>
          <FieldWells>
            <WellName>Values</WellName>
            <DropWell $margin="6px 0 13px" $pad="7px 13px">Add data fields here</DropWell>
            <WellName $strong>Drill through</WellName>
            <ToggleList>
              <Toggle label="Cross-report" initial={false} />
              <Toggle label="Keep all filters" initial={true} />
            </ToggleList>
            <DropWell $margin="6px 0 0" $pad="6px 10px">Add drill-through fields here</DropWell>
          </FieldWells>
        </VizPane>

        <DataPane>
          <PaneHead $pad="13px 3px 0 10px">
            <h2>Data</h2>
            <button aria-label="Collapse data"><DoubleChevron /></button>
          </PaneHead>
          <SearchBox>
            <svg width="18" height="18" viewBox="0 0 18 18" fill="none" stroke={line} strokeWidth="1.3" aria-hidden="true">
              <circle cx="11.500" cy="6.500" r="6" /><path d="M7 11l-7 7" />
            </svg>
            <input type="search" placeholder="Search" aria-label="Search" />
          </SearchBox>
          <TreeItem>
            <svg width="8" height="14" viewBox="0 0 8 14" fill="none" stroke={grayLine} strokeWidth="1.3" aria-hidden="true"><path d="M1 1l6 6-6 6" /></svg>
            <svg width="16" height="16" viewBox="0 0 16 16" fill="none" stroke={line} strokeWidth="1.4" aria-hidden="true"><path d="M1 1h14v14H1zM1 3h14M1 7h14M1 11h14M6 3v12M10 3v12" /></svg>
            CustomerTable
          </TreeItem>
        </DataPane>
      </Main>
    </Page>
  );
}
